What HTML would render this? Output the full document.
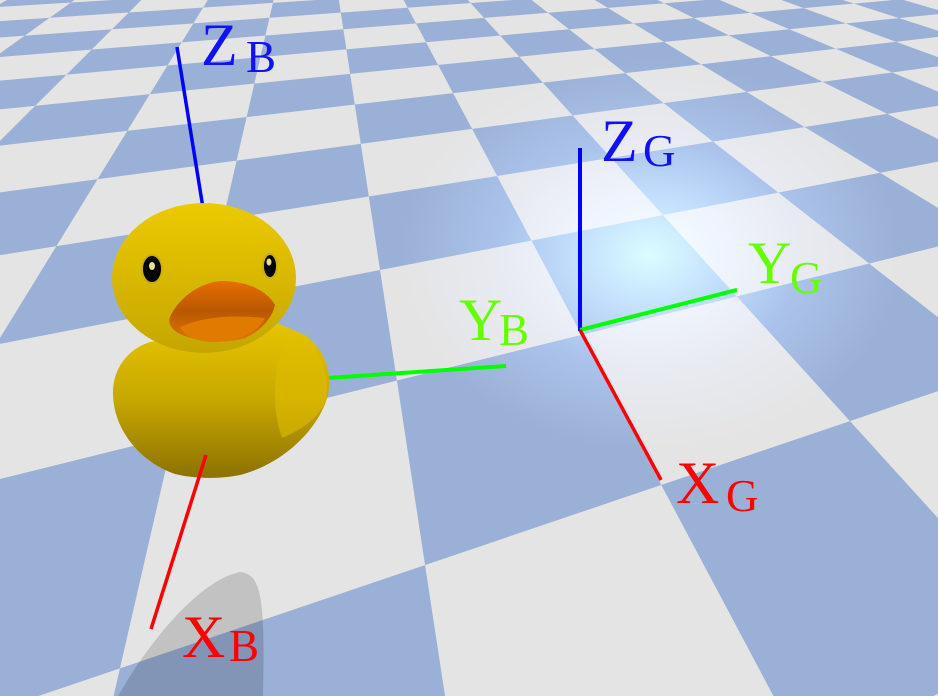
<!DOCTYPE html>
<html><head><meta charset="utf-8"><style>
html,body{margin:0;padding:0}
body{width:938px;height:696px;overflow:hidden;position:relative;background:#e4e4e4}
svg{position:absolute;left:0;top:0;overflow:hidden}
text{font-family:"Liberation Serif",serif}
</style></head><body>
<svg width="938" height="696" viewBox="0 0 938 696">
<defs>
<clipPath id="c"><rect x="0" y="0" width="938" height="696"/></clipPath>
<linearGradient id="body" x1="0" y1="0" x2="0" y2="1">
<stop offset="0" stop-color="#e8c600"/><stop offset="0.5" stop-color="#c7a800"/><stop offset="1" stop-color="#8c7200"/>
</linearGradient>
<linearGradient id="head" x1="0" y1="0" x2="0" y2="1">
<stop offset="0" stop-color="#ecca00"/><stop offset="1" stop-color="#c5a600"/>
</linearGradient>
<linearGradient id="beak" x1="0" y1="0" x2="0" y2="1">
<stop offset="0" stop-color="#e86e00"/><stop offset="0.5" stop-color="#b85800"/><stop offset="1" stop-color="#e07400"/>
</linearGradient>
<radialGradient id="light" gradientUnits="userSpaceOnUse" cx="650" cy="255" r="250" gradientTransform="translate(650 255) scale(1 0.78) translate(-650 -255)">
<stop offset="0" stop-color="rgb(163,247,255)"/>
<stop offset="0.3" stop-color="rgb(100,150,240)"/>
<stop offset="0.6" stop-color="rgb(40,60,130)"/>
<stop offset="1" stop-color="rgb(0,0,0)"/>
</radialGradient>
</defs>
<g clip-path="url(#c)" style="isolation:isolate">
<rect x="0" y="0" width="938" height="696" fill="#e4e4e4"/>
<path fill="#9bb0d6" fill-rule="evenodd" d="
M2527 -147.3 L-3000 140.1 L-3000 163.5 Z
M2527 -147.3 L-3000 189.9 L-3000 221.0 Z
M2527 -147.3 L-3000 256.9 L-3000 299.6 Z
M2527 -147.3 L-3000 351.2 L-3000 414.2 Z
M2527 -147.3 L-3000 493.4 L-3000 595.6 Z
M2527 -147.3 L-3000 733.0 L-3000 927.1 Z
M2527 -147.3 L-3000 1222.4 L-3000 1725.7 Z
M2527 -147.3 L-3000 2777.7 L-3000 6338.8 Z
M312.8 -170.8 L-7899.7 3000 L-6626.6 3000 Z
M312.8 -170.8 L-5364.0 3000 L-4111.6 3000 Z
M312.8 -170.8 L-2869.7 3000 L-1637.1 3000 Z
M312.8 -170.8 L-415.9 3000 L796.5 3000 Z
M312.8 -170.8 L1997.9 3000 L3190.4 3000 Z
M312.8 -170.8 L4374.3 3000 L5547.7 3000 Z
M312.8 -170.8 L6711.8 3000 L7866.2 3000 Z
M312.8 -170.8 L9012.4 3000 L10149.7 3000 Z
M312.8 -170.8 L11279.4 3000 L12400 3000 Z"/>
<rect x="0" y="0" width="938" height="696" fill="url(#light)" style="mix-blend-mode:screen"/>
<path d="M118 696 C150 640 200 580 240 572 C262 574 265 600 263 696 Z" fill="rgba(0,0,0,0.15)"/>
</g>
<line x1="177" y1="47" x2="203" y2="208" stroke="#0000ff" stroke-width="3.5"/>
<line x1="328" y1="378" x2="506" y2="366" stroke="#00ff00" stroke-width="4"/>
<path d="M150 342 C125 350 112 372 113 395 C114 430 140 462 175 474 C195 479 220 479 240 475 C280 465 318 432 328 395 C333 368 322 348 305 335 L270 320 Z" fill="url(#body)"/>
<path d="M300 338 C322 350 330 380 326 400 C318 420 300 430 282 438 C272 410 272 370 285 345 Z" fill="#e0bc00" opacity="0.6"/>
<ellipse cx="204" cy="278" rx="92" ry="75" fill="url(#head)"/>
<path d="M170 317 C180 295 205 280 225 281 C250 282 268 292 275 305 C272 318 262 330 245 338 C225 344 195 342 178 333 C170 328 168 322 170 317 Z" fill="url(#beak)"/>
<path d="M180 327 C205 316 235 315 265 318 C258 332 240 342 215 342 C198 342 185 337 180 327 Z" fill="#e07a00"/>
<ellipse cx="152" cy="269" rx="10" ry="14" fill="#000" stroke="#c9b000" stroke-width="2"/>
<ellipse cx="152" cy="266" rx="3" ry="4" fill="#e8e08a"/>
<ellipse cx="270" cy="266" rx="7" ry="12" fill="#000" stroke="#c9b000" stroke-width="2"/>
<ellipse cx="269" cy="262" rx="2.5" ry="3.5" fill="#e8e08a"/>
<line x1="206" y1="455" x2="151" y2="629" stroke="#ff0000" stroke-width="3.5"/>
<line x1="580" y1="148" x2="580" y2="331" stroke="#0000ff" stroke-width="4"/>
<line x1="580" y1="330" x2="737" y2="290" stroke="#00ff00" stroke-width="4"/>
<line x1="580" y1="330" x2="661" y2="480" stroke="#ff0000" stroke-width="3.5"/>
<g fill="#1010ff">
<text x="201" y="65" font-size="60">Z</text><text x="246" y="72" font-size="45">B</text>
<text x="601" y="161" font-size="60">Z</text><text x="643" y="166" font-size="45">G</text>
</g>
<g fill="#66ff00">
<text x="459" y="340" font-size="60">Y</text><text x="499" y="345" font-size="45">B</text>
<text x="748" y="283" font-size="60">Y</text><text x="790" y="293" font-size="45">G</text>
</g>
<g fill="#ff0000">
<text x="676" y="503" font-size="60">X</text><text x="726" y="511" font-size="45">G</text>
<text x="182" y="657" font-size="60">X</text><text x="229" y="661" font-size="45">B</text>
</g>
</svg>
</body></html>
